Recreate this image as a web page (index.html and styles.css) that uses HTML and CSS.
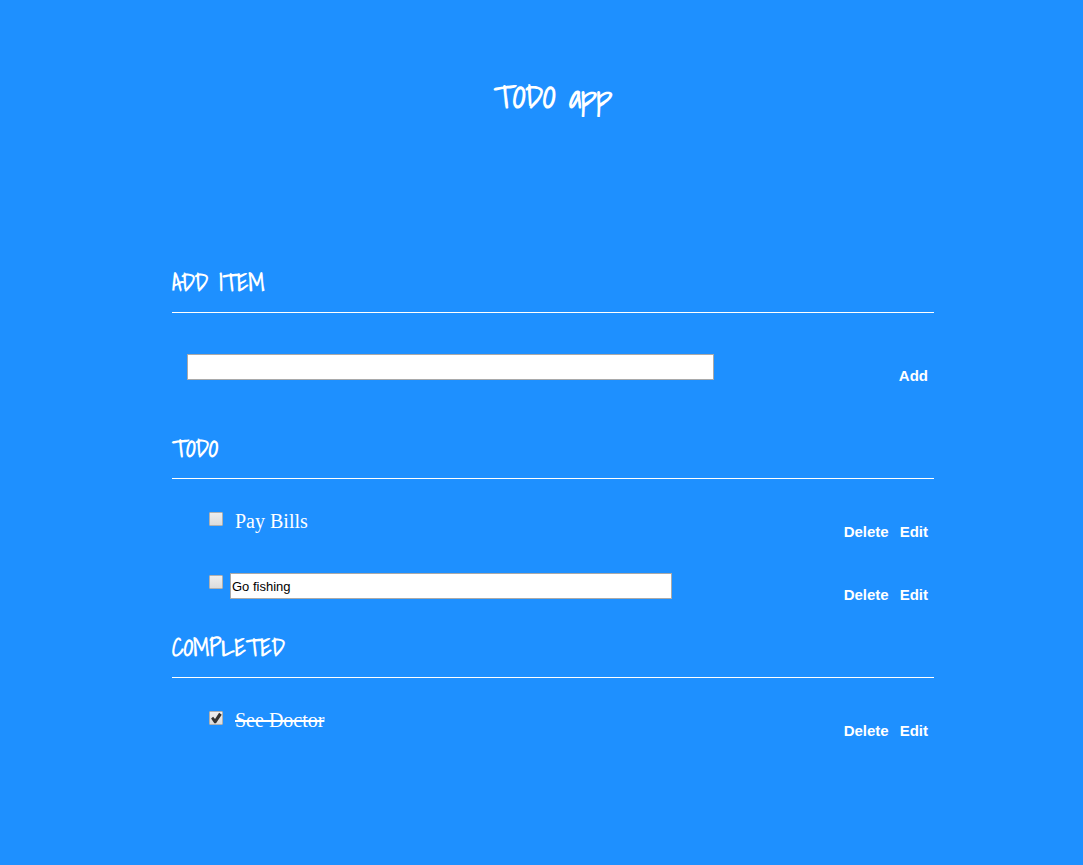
FILE: index.html
```html
<!DOCTYPE html>
<html lang="en">
<head>
<meta charset="utf-8">
<title>TODO app</title>
<link rel="stylesheet" href="styles.css">
</head>
<body>
<main class="app">
  <h1 class="title">TODO app</h1>
  <section class="section">
    <h2 class="heading"><label for="new-item">ADD ITEM</label></h2>
    <form class="add-row">
      <input class="field field-new" id="new-item" type="text">
      <div class="actions"><button class="action" type="button">Add</button></div>
    </form>
  </section>
  <section class="section">
    <h2 class="heading">TODO</h2>
    <ul class="list">
      <li class="item">
        <input class="check" id="bills" type="checkbox">
        <label class="name" for="bills">Pay Bills</label>
        <div class="actions"><button class="action" type="button">Delete</button><button class="action" type="button">Edit</button></div>
      </li>
      <li class="item">
        <input class="check" type="checkbox" aria-label="Go fishing">
        <input class="field field-edit" type="text" value="Go fishing" aria-label="Edit item">
        <div class="actions"><button class="action" type="button">Delete</button><button class="action" type="button">Edit</button></div>
      </li>
    </ul>
  </section>
  <section class="section">
    <h2 class="heading">COMPLETED</h2>
    <ul class="list">
      <li class="item">
        <input class="check" id="doctor" type="checkbox" checked>
        <label class="name done" for="doctor">See Doctor</label>
        <div class="actions"><button class="action" type="button">Delete</button><button class="action" type="button">Edit</button></div>
      </li>
    </ul>
  </section>
</main>
</body>
</html>
```
FILE: styles.css
```css
* { box-sizing: border-box; }
body {
  margin: 0;
  background: #1e90ff;
  color: #fff;
  font-family: "Liberation Serif", "Times New Roman", serif;
}
.app { padding: 76px 149px 48px 172px; }
.title, .heading {
  margin: 0;
  font-family: "Shadows Into Light", "Liberation Sans", cursive;
}
.title {
  margin-bottom: 152px;
  font-size: 32px;
  line-height: 40px;
  text-align: center;
}
.heading {
  padding-bottom: 16px;
  border-bottom: 1px solid #fff;
  font-size: 24px;
  line-height: 28px;
}
.add-row {
  display: flex;
  align-items: flex-start;
  padding: 41px 6px 48px 15px;
}
.field {
  height: 26px;
  padding: 1px;
  border: 1px solid #a9a9a9;
  border-radius: 0;
  background: #fff;
  color: #000;
  font: 13px "Liberation Sans", Arial, sans-serif;
}
.field-new { width: 71.1%; }
.field-edit { width: 61.5%; }
.list {
  margin: 0;
  padding: 11px 0 17px;
  list-style: none;
}
.item {
  display: flex;
  align-items: flex-start;
  height: 63px;
  padding: 20px 6px 0 37px;
}
.name {
  margin-left: 5px;
  font-size: 20px;
  line-height: 22px;
}
.done { text-decoration: line-through 2px; }
.check {
  appearance: none;
  position: relative;
  flex: none;
  width: 14px;
  height: 14px;
  margin: 2px 7px 0 0;
  border: 1px solid #b0b0b0;
  border-radius: 1px;
  background: linear-gradient(#eee, #dcdcdc);
}
.check:checked::after {
  content: "";
  position: absolute;
  inset: 0;
  background: #333;
  clip-path: polygon(9% 54%, 26% 39%, 42% 58%, 76% 7%, 98% 22%, 50% 94%, 36% 94%);
}
.actions {
  display: flex;
  gap: 11px;
  margin: 12px 0 0 auto;
}
.action {
  padding: 0;
  border: 0;
  background: none;
  color: #fff;
  font: bold 15px/20px "Liberation Sans", Arial, sans-serif;
  cursor: pointer;
}
```
